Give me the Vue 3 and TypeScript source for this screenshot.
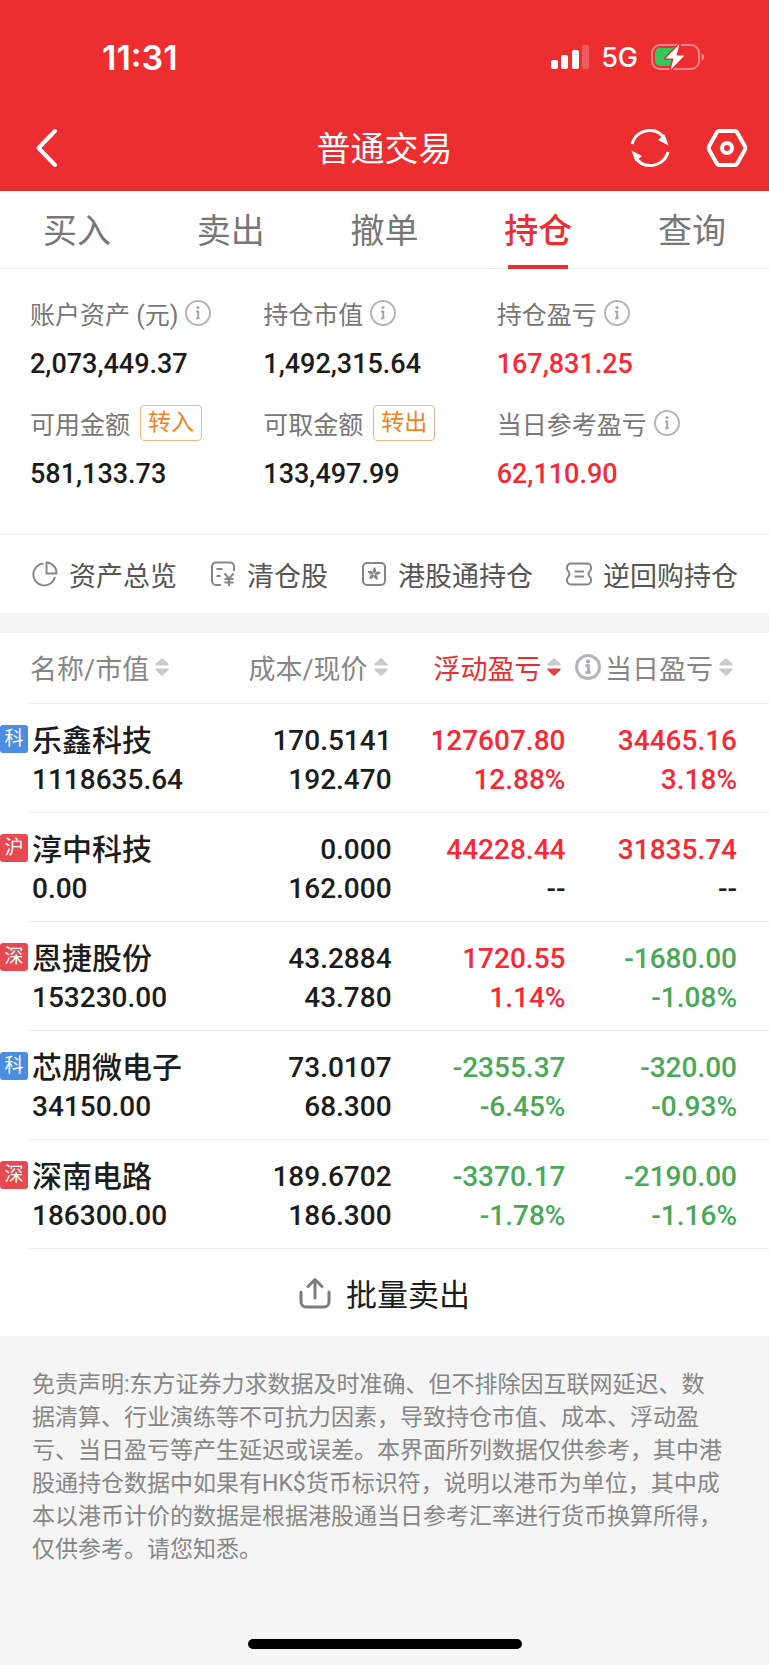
<script setup lang="ts">
import { ref } from 'vue'

type Tone = 'up' | 'down' | 'flat'

interface Metric {
  label: string
  value: string
  tone: Tone
  info?: boolean
  action?: string
}

interface Holding {
  market: string
  board: 'star' | 'main'
  name: string
  worth: string
  cost: string
  price: string
  profit: string
  profitRate: string
  today: string
  todayRate: string
}

const tabs = ['买入', '卖出', '撤单', '持仓', '查询']
const activeTab = ref('持仓')

const metrics: Metric[] = [
  { label: '账户资产 (元)', value: '2,073,449.37', tone: 'flat', info: true },
  { label: '持仓市值', value: '1,492,315.64', tone: 'flat', info: true },
  { label: '持仓盈亏', value: '167,831.25', tone: 'up', info: true },
  { label: '可用金额', value: '581,133.73', tone: 'flat', action: '转入' },
  { label: '可取金额', value: '133,497.99', tone: 'flat', action: '转出' },
  { label: '当日参考盈亏', value: '62,110.90', tone: 'up', info: true },
]

const shortcuts = [
  { icon: 'pie', label: '资产总览' },
  { icon: 'bill', label: '清仓股' },
  { icon: 'flower', label: '港股通持仓' },
  { icon: 'ticket', label: '逆回购持仓' },
]

const columns = [
  { key: 'name', label: '名称/市值' },
  { key: 'cost', label: '成本/现价' },
  { key: 'profit', label: '浮动盈亏' },
  { key: 'today', label: '当日盈亏' },
]
const sortKey = ref('profit')

const holdings: Holding[] = [
  { market: '科', board: 'star', name: '乐鑫科技', worth: '1118635.64', cost: '170.5141', price: '192.470', profit: '127607.80', profitRate: '12.88%', today: '34465.16', todayRate: '3.18%' },
  { market: '沪', board: 'main', name: '淳中科技', worth: '0.00', cost: '0.000', price: '162.000', profit: '44228.44', profitRate: '--', today: '31835.74', todayRate: '--' },
  { market: '深', board: 'main', name: '恩捷股份', worth: '153230.00', cost: '43.2884', price: '43.780', profit: '1720.55', profitRate: '1.14%', today: '-1680.00', todayRate: '-1.08%' },
  { market: '科', board: 'star', name: '芯朋微电子', worth: '34150.00', cost: '73.0107', price: '68.300', profit: '-2355.37', profitRate: '-6.45%', today: '-320.00', todayRate: '-0.93%' },
  { market: '深', board: 'main', name: '深南电路', worth: '186300.00', cost: '189.6702', price: '186.300', profit: '-3370.17', profitRate: '-1.78%', today: '-2190.00', todayRate: '-1.16%' },
]

function tone(value: string): Tone {
  if (value === '--') return 'flat'
  return value.startsWith('-') ? 'down' : 'up'
}
</script>

<template>
  <div class="page">
    <header class="top">
      <div class="status">
        <span class="time">11:31</span>
        <div class="status-right">
          <svg class="signal" viewBox="0 0 38 24" aria-hidden="true">
            <rect x="0" y="15" width="7" height="9" rx="2" />
            <rect x="10" y="10" width="7" height="14" rx="2" />
            <rect x="21" y="5" width="7" height="19" rx="2" />
            <rect x="31" y="0" width="7" height="24" rx="2" opacity="0.22" />
          </svg>
          <span class="network">5G</span>
          <svg class="battery" viewBox="0 0 54 28" aria-hidden="true">
            <rect x="1" y="2" width="47" height="24" rx="8" fill="none" stroke="#fff" stroke-opacity="0.42" stroke-width="2" />
            <path d="M50.500 10.500c3.500 1 3.500 6 0 7z" fill="#fff" fill-opacity="0.45" />
            <path d="M9 5h14v18H9a5 5 0 0 1-5-5v-8a5 5 0 0 1 5-5z" fill="#34c759" />
            <path d="M28.500 1 14.500 15.500h8L19.500 27 33.500 12.500h-8z" fill="#fff" stroke="#ec2e31" stroke-width="3" paint-order="stroke" stroke-linejoin="round" />
          </svg>
        </div>
      </div>
      <div class="nav">
        <button class="icon-button back" type="button" aria-label="返回">
          <svg viewBox="0 0 24 40"><path d="M20 3 3.500 20 20 37" fill="none" stroke="#fff" stroke-width="4" stroke-linecap="round" stroke-linejoin="round" /></svg>
        </button>
        <h1 class="title">普通交易</h1>
        <div class="nav-actions">
          <button class="icon-button" type="button" aria-label="刷新">
            <svg viewBox="0 0 42 42">
              <g fill="none" stroke="#fff" stroke-width="3">
                <path d="M3 17C5.500 8 13 3.500 21 3.500c7 0 12 3.500 15 9" />
                <path d="M39 25C36.500 34 29 38.500 21 38.500c-7 0-12-3.500-15-9" />
              </g>
              <path d="M39.500 18.500 29 13l6.500-5.500zM2.500 23.500 13 29l-6.500 5.500z" fill="#fff" />
            </svg>
          </button>
          <button class="icon-button" type="button" aria-label="设置">
            <svg viewBox="0 0 42 42">
              <g fill="none" stroke="#fff" stroke-width="4" stroke-linejoin="round">
                <path d="M13.500 4h15q2 0 3 2l7 12.500q1.500 2.500 0 5l-7 12.500q-1 2-3 2h-15q-2 0-3-2l-7-12.500q-1.500-2.500 0-5l7-12.500q1-2 3-2z" />
                <circle cx="21" cy="21" r="5" />
              </g>
            </svg>
          </button>
        </div>
      </div>
    </header>

    <main class="content">
      <nav class="tabs">
        <button
          v-for="tab in tabs"
          :key="tab"
          type="button"
          class="tab"
          :class="{ active: tab === activeTab }"
          @click="activeTab = tab"
        >{{ tab }}</button>
      </nav>

      <section class="summary">
        <div v-for="m in metrics" :key="m.label" class="metric">
          <div class="metric-label">
            <span>{{ m.label }}</span>
            <button v-if="m.info" class="info" type="button" :aria-label="m.label + '说明'">
              <svg viewBox="0 0 26 26">
                <circle cx="13" cy="13" r="12" fill="none" stroke="#b1b6be" stroke-width="2" />
                <circle cx="13" cy="7.500" r="1.600" fill="#a3a8b0" />
                <path d="M11 11.500h2.200v7M11 18.500l3.500-.5" fill="none" stroke="#a3a8b0" stroke-width="2" />
              </svg>
            </button>
            <button v-if="m.action" class="transfer" type="button">{{ m.action }}</button>
          </div>
          <div class="metric-value" :class="m.tone">{{ m.value }}</div>
        </div>
      </section>

      <nav class="shortcuts">
        <a v-for="s in shortcuts" :key="s.label" class="shortcut" href="#">
          <svg class="shortcut-icon" viewBox="0 0 26 26" fill="none" stroke="#868686" stroke-width="2" aria-hidden="true">
            <template v-if="s.icon === 'pie'">
              <path d="M11.500 2.500A11 11 0 1 0 23 16" />
              <path d="M14.500 1.500v11h10a10.500 10.500 0 0 0-10-11z" stroke-linejoin="round" />
            </template>
            <template v-else-if="s.icon === 'bill'">
              <path d="M11 24H6a4 4 0 0 1-4-4V5.500a4 4 0 0 1 4-4h14a4 4 0 0 1 4 4V10" />
              <path d="M6.500 8h6M6.500 15h4M14.500 12.500l4.500 5 4.500-5M19 17.500V25M14.500 18h9M14.500 21.500h9" />
            </template>
            <template v-else-if="s.icon === 'flower'">
              <rect x="2" y="2" width="22" height="22" rx="4" />
              <g fill="#868686" stroke="none">
                <path
                  v-for="n in 5"
                  :key="n"
                  d="M13 12.500c-2-1-2-4.500 1-6.500 0 1.500 1.500 2 1 4-.3 1-1.200 1.500-2 2.500z"
                  :transform="`rotate(${n * 72} 13 13)`"
                />
              </g>
            </template>
            <template v-else>
              <path d="M5 2.500h16a4 4 0 0 1 4 4V8c0 1.500-2.500 2-2.500 5s2.500 3.500 2.500 5v1.500a4 4 0 0 1-4 4H5a4 4 0 0 1-4-4V18c0-1.500 2.500-2 2.500-5S1 9.500 1 8V6.500a4 4 0 0 1 4-4z" />
              <path d="M8.500 10.500h9.500M8.500 15.500h9.500" />
            </template>
          </svg>
          <span>{{ s.label }}</span>
        </a>
      </nav>

      <section class="positions">
        <table class="grid">
          <colgroup>
            <col class="col-name" />
            <col class="col-cost" />
            <col class="col-profit" />
            <col class="col-today" />
          </colgroup>
          <thead>
            <tr>
              <th v-for="c in columns" :key="c.key" scope="col">
                <div class="head">
                  <button v-if="c.key === 'today'" class="info" type="button" aria-label="当日盈亏说明">
                    <svg viewBox="0 0 26 26">
                      <circle cx="13" cy="13" r="11.500" fill="none" stroke="#b1b6be" stroke-width="3" />
                      <circle cx="13" cy="7.500" r="2" fill="#a3a8b0" />
                      <path d="M10.500 11.500h3v7M10.500 18.500h5" fill="none" stroke="#a3a8b0" stroke-width="2.500" />
                    </svg>
                  </button>
                  <button class="sort" type="button" :class="{ active: c.key === sortKey }" @click="sortKey = c.key">
                    <span>{{ c.label }}</span>
                    <svg class="arrows" viewBox="0 0 14 18" aria-hidden="true">
                      <path d="M.5 7.500v-1.500L6 .8q1-1 2 0L13.500 6v1.500z" fill="#cacaca" />
                      <path class="desc" d="M.5 10.500V12L6 17.200q1 1 2 0L13.500 12v-1.500z" fill="#cacaca" />
                    </svg>
                  </button>
                </div>
              </th>
            </tr>
          </thead>
          <tbody>
            <tr v-for="h in holdings" :key="h.name">
              <td>
                <span class="badge" :class="h.board">{{ h.market }}</span>
                <div class="name">{{ h.name }}</div>
                <div>{{ h.worth }}</div>
              </td>
              <td>
                <div>{{ h.cost }}</div>
                <div>{{ h.price }}</div>
              </td>
              <td>
                <div :class="tone(h.profit)">{{ h.profit }}</div>
                <div :class="tone(h.profitRate)">{{ h.profitRate }}</div>
              </td>
              <td>
                <div :class="tone(h.today)">{{ h.today }}</div>
                <div :class="tone(h.todayRate)">{{ h.todayRate }}</div>
              </td>
            </tr>
          </tbody>
        </table>
      </section>

      <button class="batch" type="button">
        <svg viewBox="0 0 32 32" fill="none" stroke="#7c7c7c" stroke-width="3" stroke-linecap="round" stroke-linejoin="round" aria-hidden="true">
          <path d="M2 15v10a5 5 0 0 0 5 5h18a5 5 0 0 0 5-5V15" />
          <path d="M16 21V2.500M9 9.500l7-7 7 7" />
        </svg>
        <span>批量卖出</span>
      </button>
    </main>

    <footer class="footer">
      <p class="disclaimer">免责声明:东方证券力求数据及时准确、但不排除因互联网延迟、数据清算、行业演练等不可抗力因素，导致持仓市值、成本、浮动盈亏、当日盈亏等产生延迟或误差。本界面所列数据仅供参考，其中港股通持仓数据中如果有HK$货币标识符，说明以港币为单位，其中成本以港币计价的数据是根据港股通当日参考汇率进行货币换算所得，仅供参考。请您知悉。</p>
      <div class="home-bar"></div>
    </footer>
  </div>
</template>

<style>
body {
  margin: 0;
  background: #f5f5f5;
}
</style>

<style scoped>
.page {
  display: flex;
  flex-direction: column;
  min-height: 100vh;
  background: #f5f5f5;
  color: #1c1c1c;
  font-family: Roboto, "Noto Sans CJK SC", sans-serif;
}
button {
  margin: 0;
  padding: 0;
  border: 0;
  background: none;
  color: inherit;
  font: inherit;
  cursor: pointer;
}
svg {
  display: block;
}
.top {
  padding-bottom: 9px;
  background: #ec2e31;
  color: #fff;
}
.status {
  display: flex;
  align-items: center;
  justify-content: space-between;
  height: 114px;
  padding: 0 64px 0 102px;
  font-family: Inter, sans-serif;
}
.time {
  font-size: 34px;
  font-weight: 600;
}
.status-right {
  display: flex;
  align-items: center;
}
.signal {
  width: 38px;
  height: 24px;
  fill: #fff;
}
.network {
  margin: 0 13px 0 12px;
  font-size: 27px;
  font-weight: 500;
}
.battery {
  width: 54px;
  height: 28px;
}
.nav {
  display: grid;
  grid-template-columns: 1fr auto 1fr;
  align-items: center;
  height: 68px;
  padding: 0 21px;
}
.back svg {
  width: 24px;
  height: 40px;
  margin-left: 14px;
}
.title {
  margin: 0;
  padding-bottom: 4px;
  font-size: 34px;
  font-weight: 400;
}
.nav-actions {
  display: flex;
  justify-content: flex-end;
  gap: 35px;
}
.nav-actions svg {
  width: 42px;
  height: 42px;
}
.content {
  background: #fff;
}
.tabs {
  display: grid;
  grid-template-columns: repeat(5, 1fr);
  height: 77px;
  border-bottom: 1px solid #ececec;
}
.tab {
  position: relative;
  padding-bottom: 2px;
  color: #777;
  font-size: 34px;
}
.tab.active {
  color: #ec2e31;
  font-weight: 500;
}
.tab.active::after {
  content: "";
  position: absolute;
  bottom: -1px;
  left: 50%;
  width: 60px;
  height: 4px;
  margin-left: -30px;
  background: #ec2e31;
}
.summary {
  display: grid;
  grid-template-columns: repeat(3, 1fr);
  row-gap: 21px;
  padding: 26px 39px 39px 30px;
  border-bottom: 2px solid #f4f4f4;
}
.metric-label {
  display: flex;
  align-items: center;
  gap: 7px;
  height: 36px;
  margin-bottom: 13px;
  color: #777;
  font-size: 25px;
  white-space: nowrap;
}
.metric-value {
  font-size: 27px;
  font-weight: 500;
  line-height: 40px;
}
.info svg {
  width: 26px;
  height: 26px;
}
.transfer {
  box-sizing: border-box;
  height: 36px;
  margin-left: 3px;
  padding: 0 7px;
  border: 1px solid #f9b483;
  border-radius: 4px;
  color: #f58220;
  font-size: 23px;
  line-height: 34px;
}
.up {
  color: #fa2837;
}
.down {
  color: #4aa959;
}
.flat {
  color: #1c1c1c;
}
.shortcuts {
  display: flex;
  align-items: center;
  justify-content: space-between;
  height: 78px;
  padding: 0 31px 0 32px;
  border-bottom: 20px solid #f4f4f4;
}
.shortcut {
  display: flex;
  align-items: center;
  gap: 11px;
  color: #555;
  font-size: 27px;
  text-decoration: none;
  white-space: nowrap;
}
.shortcut-icon {
  width: 26px;
  height: 26px;
}
.positions {
  padding-left: 29px;
}
.grid {
  width: 100%;
  table-layout: fixed;
  border-collapse: separate;
  border-spacing: 0;
}
.col-name {
  width: 26%;
}
.col-cost {
  width: 23%;
}
.col-profit {
  width: 23.5%;
}
.col-today {
  width: 27.5%;
}
th,
td {
  padding: 0;
  border-bottom: 1px solid #ececec;
  text-align: right;
}
th {
  height: 70px;
  color: #868686;
  font-size: 27px;
  font-weight: 400;
}
.head {
  display: flex;
  align-items: center;
  justify-content: flex-end;
  gap: 4px;
  padding: 0 4px 2px 0;
  white-space: nowrap;
}
th:first-child .head {
  justify-content: flex-start;
  padding-left: 1px;
}
.sort {
  display: flex;
  align-items: center;
  gap: 6px;
}
.sort.active {
  color: #ec2e31;
}
.sort.active .desc {
  fill: #e2414a;
}
.arrows {
  width: 14px;
  height: 18px;
}
td {
  padding: 17px 0 13px;
  font-size: 28px;
  font-weight: 500;
  line-height: 39px;
}
th:last-child,
td:last-child {
  padding-right: 32px;
}
td:first-child {
  position: relative;
  padding-left: 3px;
  text-align: left;
}
th:first-child {
  text-align: left;
}
.name {
  font-size: 30px;
  white-space: nowrap;
}
.badge {
  position: absolute;
  top: 21px;
  left: -29px;
  width: 28px;
  height: 28px;
  border-radius: 3px;
  color: #fff;
  font-size: 19px;
  font-weight: 400;
  line-height: 28px;
  text-align: center;
}
.badge.star {
  background: #4b8de0;
}
.badge.main {
  background: #e64a50;
}
.batch {
  display: flex;
  align-items: center;
  justify-content: center;
  gap: 15px;
  width: 100%;
  height: 87px;
  font-size: 31px;
}
.batch svg {
  width: 32px;
  height: 32px;
}
.footer {
  display: flex;
  flex: 1;
  flex-direction: column;
  align-items: center;
  justify-content: space-between;
  padding: 32px 0 16px;
}
.disclaimer {
  margin: 0;
  padding: 0 44px 0 32px;
  color: #868686;
  font-size: 23px;
  line-height: 33px;
}
.home-bar {
  width: 274px;
  height: 10px;
  border-radius: 5px;
  background: #000;
}
</style>
